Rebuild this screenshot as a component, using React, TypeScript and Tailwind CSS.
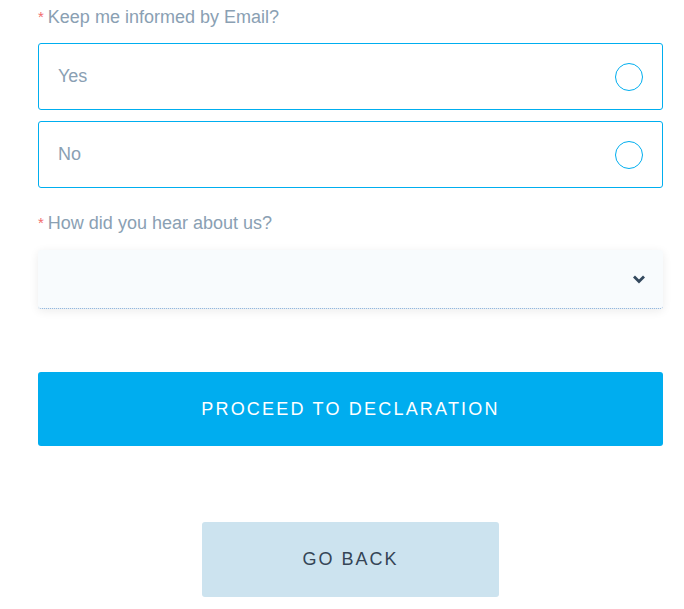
import React from "react";

function Option({ label }: { label: string }) {
  return (
    <div className="flex h-[67px] items-center justify-between rounded-[3px] border border-[#00aeef] pl-[19px] pr-[19px]">
      <span className="text-[18px] text-[#8aa0b3]">{label}</span>
      <span className="h-[28px] w-[28px] rounded-full border border-[#00aeef]" />
    </div>
  );
}

export default function App() {
  return (
    <div
      className="min-h-[609px] w-[684px] bg-white pl-[38px] pr-[21px] pb-[12px]"
      style={{ fontFamily: '"Liberation Sans", Arial, sans-serif' }}
    >
      <div className="flex h-[35px] items-center text-[18px] text-[#8aa0b3]">
        <span className="mr-[4px] text-[15px] text-[#f26b6b]">*</span>
        Keep me informed by Email?
      </div>
      <div className="mt-[8px] flex flex-col gap-[11px]">
        <Option label="Yes" />
        <Option label="No" />
      </div>
      <div className="mt-[23px] flex h-[25px] items-center text-[18px] text-[#8aa0b3]">
        <span className="mr-[4px] text-[15px] text-[#f26b6b]">*</span>
        How did you hear about us?
      </div>
      <div className="mt-[14px] flex h-[59px] items-center justify-end rounded-[3px] border-b border-dotted border-[#7fa9d6] bg-[#f8fbfd] pr-[17px] shadow-[0_2px_10px_rgba(0,0,0,0.08)]">
        <svg width="14" height="10" viewBox="0 0 14 10">
          <path d="M2 2.5 L7 7.5 L12 2.5" fill="none" stroke="#34495e" strokeWidth="2.8" />
        </svg>
      </div>
      <button className="mt-[63px] flex h-[74px] w-full items-center justify-center rounded-[3px] bg-[#00adef] text-[18px] tracking-[2.2px] text-white">
        PROCEED TO DECLARATION
      </button>
      <div className="mt-[76px] flex justify-center">
        <button className="flex h-[75px] w-[297px] items-center justify-center rounded-[3px] bg-[#cce3ef] text-[18px] tracking-[2px] text-[#354556]">
          GO BACK
        </button>
      </div>
    </div>
  );
}
